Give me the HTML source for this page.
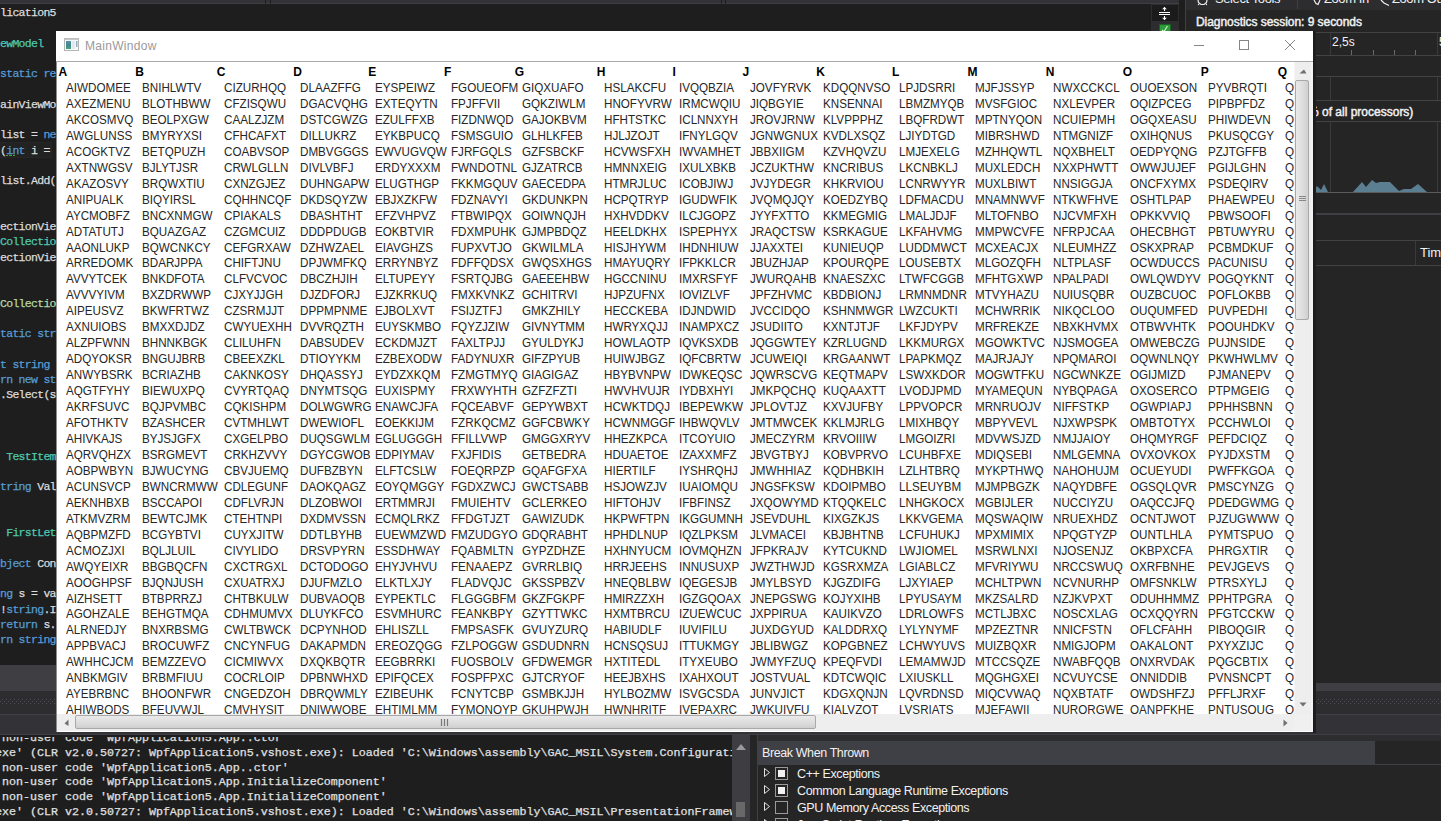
<!DOCTYPE html><html><head><meta charset="utf-8"><style>
*{margin:0;padding:0;box-sizing:border-box}
html,body{width:1441px;height:821px;overflow:hidden;background:#1e1e1e;font-family:"Liberation Sans",sans-serif}
.a{position:absolute}
.mono{font-family:"Liberation Mono",monospace;white-space:pre}
.code{font-size:11.5px;letter-spacing:-0.7px;line-height:15.29px;color:#dcdcdc;-webkit-text-stroke:0.25px currentColor}
.k{color:#569cd6}.t{color:#4ec9b0}.y{color:#b8d7a3}
.out{font-size:11.67px;line-height:14.75px;color:#e0e0e0;-webkit-text-stroke:0.25px currentColor}
.win{left:56px;top:31px;width:1257px;height:701px;background:#fff;overflow:hidden}
.col{position:absolute;top:0;white-space:pre;font-size:12px;line-height:15.95px;color:#262626;transform:scaleX(0.97);transform-origin:0 0}
.hdr{position:absolute;font-weight:bold;font-size:12px;color:#000}
</style></head><body><div class="a" style="left:0;top:0;width:1179px;height:4px;background:#333337"></div><div class="a" style="left:0;top:3px;width:1179px;height:1px;background:#3f3f46"></div><div class="a" style="left:265px;top:0;width:1px;height:4px;background:#1e1e1e"></div><div class="a" style="left:270px;top:0;width:1px;height:4px;background:#1e1e1e"></div><div class="a" style="left:721px;top:0;width:1px;height:4px;background:#1e1e1e"></div><div class="a" style="left:725px;top:0;width:1px;height:4px;background:#1e1e1e"></div><div class="a" style="left:0;top:142px;width:52px;height:16px;background:#222223;border:1px solid #262627;border-left:0"></div><div class="a" style="left:6px;top:155px;width:10px;height:1px;background:repeating-linear-gradient(90deg,#3aa83a 0 2px,transparent 2px 3.5px)"></div><div class="a mono code" style="left:0;top:5px;width:60px">lication5

<span class="t">ewModel</span>

<span class="k">static re</span>

ainViewMo

list = <span class="k">ne</span>
(<span class="k">int</span> i = 

list.Add(


ectionVie
<span class="t">Collectio</span>
ectionVie


<span class="y">Collectio</span>

<span class="k">tatic str</span>

<span class="k">t string</span>
<span class="k">rn new st</span>
.Select(s



 <span class="t">TestItem</span>

<span class="k">tring</span> Val


 <span class="t">FirstLet</span>

<span class="k">bject</span> Con

<span class="k">ng</span> s = va
!<span class="k">string</span>.I
<span class="k">return</span> s.
<span class="k">rn string</span></div><div class="a" style="left:1151px;top:4px;width:28px;height:27px;background:#2d2d30"></div><div class="a" style="left:1152px;top:5px;width:26px;height:16px;background:#1b1b1c"></div><svg class="a" style="left:1152px;top:5px" width="26" height="16"><g stroke="#fff" stroke-width="1" fill="none"><line x1="7" y1="7.5" x2="18" y2="7.5"/><line x1="7" y1="9.5" x2="18" y2="9.5"/><line x1="12.5" y1="3" x2="12.5" y2="6"/><line x1="12.5" y1="11" x2="12.5" y2="14"/></g><g fill="#fff"><path d="M10.2 4.2 L12.5 1.8 L14.8 4.2Z"/><path d="M10.2 12.8 L12.5 15.2 L14.8 12.8Z"/></g></svg><div class="a" style="left:1159px;top:24px;width:12px;height:8px;background:#2e9c3a;border:1px solid #1f5e27;border-bottom:0"></div><svg class="a" style="left:1159px;top:24px" width="12" height="8"><path d="M3 6 L5 7.5 L8.5 2" stroke="#c8f0c8" stroke-width="1.2" fill="none"/></svg><div class="a" style="left:1185px;top:0;width:1px;height:32px;background:#3f3f46"></div><div class="a" style="left:0;top:665px;width:1441px;height:26px;background:#3e3e43"></div><div class="a" style="left:0;top:691px;width:1441px;height:23px;background:#2d2d30"></div><svg class="a" style="left:0;top:697px" width="1441" height="8"><defs><pattern id="dp" width="4" height="4" patternUnits="userSpaceOnUse"><rect x="0" y="0" width="1" height="1" fill="#4e4e53"/><rect x="2" y="2" width="1" height="1" fill="#4e4e53"/></pattern></defs><rect x="0" y="2" width="1441" height="5" fill="url(#dp)"/></svg><div class="a" style="left:0;top:714px;width:1441px;height:1px;background:#3f3f46"></div><div class="a" style="left:0;top:715px;width:1441px;height:19px;background:#333337"></div><div class="a" style="left:0;top:734px;width:1441px;height:1px;background:#3f3f46"></div><div class="a" style="left:1186px;top:0;width:255px;height:683px;background:#252526"></div><div class="a" style="left:1186px;top:0;width:255px;height:10px;background:#2d2d30"></div><svg class="a" style="left:1196px;top:0" width="200" height="10"><g fill="none" stroke="#f1f1f1" stroke-width="1.2"><path d="M2 0 L2.5 2.5 L5 4.5 L8 4.5 L10.5 2.5 L11 0"/><path d="M3 3.8 L2.2 5 M10 3.8 L10.8 5"/><path d="M118 0 L120 3.5 L122 4.5 L124 0"/><path d="M185 0 L188 3 L193 5.5"/></g></svg><div class="a" style="left:1297px;top:0;width:1px;height:9px;background:#3f3f46"></div><div class="a" style="left:1196px;top:15px;font-size:12px;color:#f1f1f1;white-space:pre;letter-spacing:-0.05px;-webkit-text-stroke:0.45px #f1f1f1">Diagnostics session: 9 seconds</div><div class="a" style="left:1215px;top:-9px;font-size:13px;color:#f1f1f1;white-space:pre;letter-spacing:-0.4px">Select Tools</div><div class="a" style="left:1324px;top:-9px;font-size:13px;color:#f1f1f1;white-space:pre;letter-spacing:-0.4px">Zoom In</div><div class="a" style="left:1392px;top:-9px;font-size:13px;color:#f1f1f1;white-space:pre;letter-spacing:-0.4px">Zoom Out</div><div class="a" style="left:1313px;top:32px;width:128px;height:1px;background:#434346"></div><div class="a" style="left:1313px;top:55px;width:128px;height:1px;background:#434346"></div><div class="a" style="left:1313px;top:76px;width:128px;height:1px;background:#434346"></div><div class="a" style="left:1313px;top:100px;width:128px;height:1px;background:#434346"></div><div class="a" style="left:1313px;top:121px;width:128px;height:1px;background:#434346"></div><div class="a" style="left:1313px;top:192px;width:128px;height:1px;background:#5b5b5e"></div><div class="a" style="left:1313px;top:213px;width:128px;height:2px;background:#3f3f46"></div><div class="a" style="left:1313px;top:240px;width:128px;height:1px;background:#434346"></div><div class="a" style="left:1313px;top:265px;width:128px;height:1px;background:#434346"></div><div class="a" style="left:1330px;top:33px;width:1px;height:22px;background:#3a3a3d"></div><div class="a" style="left:1437px;top:33px;width:1px;height:22px;background:#3a3a3d"></div><div class="a" style="left:1330px;top:77px;width:1px;height:23px;background:#3a3a3d"></div><div class="a" style="left:1437px;top:77px;width:1px;height:23px;background:#3a3a3d"></div><div class="a" style="left:1330px;top:122px;width:1px;height:70px;background:#3a3a3d"></div><div class="a" style="left:1437px;top:122px;width:1px;height:70px;background:#3a3a3d"></div><div class="a" style="left:1415px;top:241px;width:1px;height:24px;background:#3a3a3d"></div><div class="a" style="left:1351px;top:50px;width:1px;height:5px;background:#6a6a6a"></div><div class="a" style="left:1373px;top:50px;width:1px;height:5px;background:#6a6a6a"></div><div class="a" style="left:1394px;top:50px;width:1px;height:5px;background:#6a6a6a"></div><div class="a" style="left:1415px;top:50px;width:1px;height:5px;background:#6a6a6a"></div><div class="a" style="left:1332px;top:35px;font-size:12px;color:#f1f1f1;white-space:pre">2,5s</div><div class="a" style="left:1439px;top:35px;font-size:12px;color:#f1f1f1;white-space:pre">5</div><div class="a" style="left:1308px;top:105px;font-size:12px;color:#f1f1f1;white-space:pre;-webkit-text-stroke:0.45px #f1f1f1">% of all processors)</div><svg class="a" style="left:1313px;top:175px" width="128" height="18"><path d="M0 17 L4 11 L8 15 L11 9 L15 17 L40 17 L49 7 L53 12 L59 5 L63 8 L67 7 L77 7 L86 16 L91 14 L98 14 L105 9 L114 17 Z" fill="#5b7e91"/></svg><div class="a" style="left:1420px;top:245px;font-size:13px;color:#f1f1f1;white-space:pre">Tim</div><div class="a" style="left:0;top:735px;width:1441px;height:86px;background:#252526"></div><div class="a" style="left:0;top:735px;width:732px;height:86px;background:#1e1e1e"></div><div class="a" style="left:0;top:737px;width:732px;height:84px;overflow:hidden"><div class="a mono out" style="left:-5px;top:-6px"> non-user code 'WpfApplication5.App..ctor'
exe' (CLR v2.0.50727: WpfApplication5.vshost.exe): Loaded 'C:\Windows\assembly\GAC_MSIL\System.Configurati
 non-user code 'WpfApplication5.App..ctor'
 non-user code 'WpfApplication5.App.InitializeComponent'
 non-user code 'WpfApplication5.App.InitializeComponent'
exe' (CLR v2.0.50727: WpfApplication5.vshost.exe): Loaded 'C:\Windows\assembly\GAC_MSIL\PresentationFramew</div></div><div class="a" style="left:732px;top:735px;width:18px;height:86px;background:#3e3e42"></div><svg class="a" style="left:736px;top:744px" width="10" height="6"><path d="M0 6 L5 0 L10 6Z" fill="#999"/></svg><div class="a" style="left:736px;top:802px;width:9px;height:15px;background:#686868"></div><div class="a" style="left:757px;top:735px;width:1px;height:86px;background:#3f3f46"></div><div class="a" style="left:758px;top:735px;width:683px;height:6px;background:#2d2d30"></div><div class="a" style="left:758px;top:741px;width:617px;height:24px;background:#3f3f46"></div><div class="a" style="left:1375px;top:764px;width:66px;height:1px;background:#3f3f46"></div><div class="a" style="left:762px;top:746px;font-size:12.5px;color:#f1f1f1;white-space:pre;letter-spacing:-0.4px">Break When Thrown</div><svg class="a" style="left:764px;top:768px" width="7" height="9"><path d="M0.5 0.5 L5.5 4.5 L0.5 8.5Z" fill="none" stroke="#e0e0e0" stroke-width="1"/></svg><div class="a" style="left:775px;top:767px;width:13px;height:13px;border:1px solid #9a9a9a;background:#252526"></div><div class="a" style="left:778px;top:770px;width:7px;height:7px;background:#f1f1f1"></div><div class="a" style="left:797px;top:767px;font-size:12.5px;color:#f1f1f1;white-space:pre;letter-spacing:-0.4px">C++ Exceptions</div><svg class="a" style="left:764px;top:785px" width="7" height="9"><path d="M0.5 0.5 L5.5 4.5 L0.5 8.5Z" fill="none" stroke="#e0e0e0" stroke-width="1"/></svg><div class="a" style="left:775px;top:784px;width:13px;height:13px;border:1px solid #9a9a9a;background:#252526"></div><div class="a" style="left:778px;top:787px;width:7px;height:7px;background:#f1f1f1"></div><div class="a" style="left:797px;top:784px;font-size:12.5px;color:#f1f1f1;white-space:pre;letter-spacing:-0.4px">Common Language Runtime Exceptions</div><svg class="a" style="left:764px;top:802px" width="7" height="9"><path d="M0.5 0.5 L5.5 4.5 L0.5 8.5Z" fill="none" stroke="#e0e0e0" stroke-width="1"/></svg><div class="a" style="left:775px;top:801px;width:13px;height:13px;border:1px solid #9a9a9a;background:#252526"></div><div class="a" style="left:797px;top:801px;font-size:12.5px;color:#f1f1f1;white-space:pre;letter-spacing:-0.4px">GPU Memory Access Exceptions</div><svg class="a" style="left:764px;top:819px" width="7" height="9"><path d="M0.5 0.5 L5.5 4.5 L0.5 8.5Z" fill="none" stroke="#e0e0e0" stroke-width="1"/></svg><div class="a" style="left:775px;top:818px;width:13px;height:13px;border:1px solid #9a9a9a;background:#252526"></div><div class="a" style="left:797px;top:818px;font-size:12.5px;color:#f1f1f1;white-space:pre;letter-spacing:-0.4px">JavaScript Runtime Exceptions</div><div class="a" style="left:1313px;top:31px;width:3px;height:702px;background:linear-gradient(90deg,#1a1a1a,#202021)"></div><div class="a win"><svg class="a" style="left:8px;top:7px" width="15" height="13"><defs><linearGradient id="ig" x1="0" y1="0" x2="0" y2="1"><stop offset="0" stop-color="#5a8fa8"/><stop offset="0.5" stop-color="#3e8a90"/><stop offset="1" stop-color="#4aa07a"/></linearGradient></defs><rect x="0.5" y="0.5" width="14" height="12" fill="#f4fafa" stroke="#b4b4b4"/><rect x="0.5" y="0.5" width="14" height="1.5" fill="#c8c8c8"/><rect x="2" y="3" width="5" height="8" fill="url(#ig)"/><rect x="8" y="3" width="3" height="8" fill="#e6e6ee"/><rect x="12" y="3" width="1.5" height="6" fill="#8fb0b8"/></svg><div class="a" style="left:29px;top:8px;font-size:12px;color:#999;white-space:pre;letter-spacing:0.3px">MainWindow</div><svg class="a" style="left:1130px;top:0" width="127" height="30"><g stroke="#858585" stroke-width="1" fill="none"><line x1="8" y1="14.5" x2="18" y2="14.5"/><rect x="53.5" y="9.5" width="9" height="9"/><line x1="99" y1="9" x2="109" y2="19"/><line x1="109" y1="9" x2="99" y2="19"/></g></svg><div class="a" style="left:0;top:30px;width:1257px;height:1px;background:#a9a9a9"></div><div class="a" style="left:0;top:31px;width:1px;height:670px;background:#8c8c8c"></div><div class="a" style="left:1px;top:31px;width:1237px;height:652px;overflow:hidden"><div class="hdr" style="left:1.6px;top:3px">A</div><div class="col" style="left:8.6px;top:19px">AIWDOMEE
AXEZMENU
AKCOSMVQ
AWGLUNSS
ACOGKTVZ
AXTNWGSV
AKAZOSVY
ANIPUALK
AYCMOBFZ
ADTATUTJ
AAONLUKP
ARREDOMK
AVVYTCEK
AVVVYIVM
AIPEUSVZ
AXNUIOBS
ALZPFWNN
ADQYOKSR
ANWYBSRK
AQGTFYHY
AKRFSUVC
AFOTHKTV
AHIVKAJS
AQRVQHZX
AOBPWBYN
ACUNSVCP
AEKNHBXB
ATKMVZRM
AQBPMZFD
ACMOZJXI
AWQYEIXR
AOOGHPSF
AIZHSETT
AGOHZALE
ALRNEDJY
APPBVACJ
AWHHCJCM
ANBKMGIV
AYEBRBNC
AHIWBODS</div><div class="hdr" style="left:78.3px;top:3px">B</div><div class="col" style="left:85.3px;top:19px">BNIHLWTV
BLOTHBWW
BEOLPXGW
BMYRYXSI
BETQPUZH
BJLYTJSR
BRQWXTIU
BIQYIRSL
BNCXNMGW
BQUAZGAZ
BQWCNKCY
BDARJPPA
BNKDFOTA
BXZDRWWP
BKWFRTWZ
BMXXDJDZ
BHNNKBGK
BNGUJBRB
BCRIAZHB
BIEWUXPQ
BQJPVMBC
BZASHCER
BYJSJGFX
BSRGMEVT
BJWUCYNG
BWNCRMWW
BSCCAPOI
BEWTCJMK
BCGYBTVI
BQLJLUIL
BBGBQCFN
BJQNJUSH
BTBPRRZJ
BEHGTMQA
BNXRBSMG
BROCUWFZ
BEMZZEVO
BRBMFIUU
BHOONFWR
BFEUVWJL</div><div class="hdr" style="left:159.8px;top:3px">C</div><div class="col" style="left:166.8px;top:19px">CIZURHQQ
CFZISQWU
CAALZJZM
CFHCAFXT
COABVSOP
CRWLGLLN
CXNZGJEZ
CQHHNCQF
CPIAKALS
CZGMCUIZ
CEFGRXAW
CHIFTJNU
CLFVCVOC
CJXYJJGH
CZSRMJJT
CWYUEXHH
CLILUHFN
CBEEXZKL
CAKNKOSY
CVYRTQAQ
CQKISHPM
CVTMHLWT
CXGELPBO
CRKHZVVY
CBVJUEMQ
CDLEGUNF
CDFLVRJN
CTEHTNPI
CUYXJITW
CIVYLIDO
CXCTRGXL
CXUATRXJ
CHTBKULW
CDHMUMVX
CWLTBWCK
CNCYNFUG
CICMIWVX
COCRLOIP
CNGEDZOH
CMVHYSIT</div><div class="hdr" style="left:236.3px;top:3px">D</div><div class="col" style="left:243.3px;top:19px">DLAAZFFG
DGACVQHG
DSTCGWZG
DILLUKRZ
DMBVGGGS
DIVLVBFJ
DUHNGAPW
DKDSQYZW
DBASHTHT
DDDPDUGB
DZHWZAEL
DPJWMFKQ
DBCZHJIH
DJZDFORJ
DPPMPNME
DVVRQZTH
DABSUDEV
DTIOYYKM
DHQASSYJ
DNYMTSQG
DOLWGWRG
DWEWIOFL
DUQSGWLM
DGYCGWOB
DUFBZBYN
DAOKQAGZ
DLZOBWOI
DXDMVSSN
DDTLBYHB
DRSVPYRN
DCTODOGO
DJUFMZLO
DUBVAOQB
DLUYKFCO
DCPYNHOD
DAKAPMDN
DXQKBQTR
DPBNWHXD
DBRQWMLY
DNIWWOBE</div><div class="hdr" style="left:311.3px;top:3px">E</div><div class="col" style="left:318.3px;top:19px">EYSPEIWZ
EXTEQYTN
EZULFFXB
EYKBPUCQ
EWVUGVQW
ERDYXXXM
ELUGTHGP
EBJXZKFW
EFZVHPVZ
EOKBTVIR
EIAVGHZS
ERRYNBYZ
ELTUPEYY
EJZKRKUQ
EJBOLXVT
EUYSKMBO
ECKDMJZT
EZBEXODW
EYDZXKQM
EUXISPMY
ENAWCJFA
EOEKKIJM
EGLUGGGH
EDPIYMAV
ELFTCSLW
EOYQMGGY
ERTMMRJI
ECMQLRKZ
EUEWMZWD
ESSDHWAY
EHYJVHVU
ELKTLXJY
EYPEKTLC
ESVMHURC
EHLISZLL
EREOZQGG
EEGBRRKI
EPIFQCEX
EZIBEUHK
EHTIMLMM</div><div class="hdr" style="left:387.0px;top:3px">F</div><div class="col" style="left:394.0px;top:19px">FGOUEOFM
FPJFFVII
FIZDNWQD
FSMSGUIO
FJRFGQLS
FWNDOTNL
FKKMGQUV
FDZNAVYI
FTBWIPQX
FDXMPUHK
FUPXVTJO
FDFFQDSX
FSRTQJBG
FMXKVNKZ
FSIJZTFJ
FQYZJZIW
FAXLTPJJ
FADYNUXR
FZMGTMYQ
FRXWYHTH
FQCEABVF
FZRKQCMZ
FFILLVWP
FXJFIDIS
FOEQRPZP
FGDXZWCJ
FMUIEHTV
FFDGTJZT
FMZUDGYO
FQABMLTN
FENAAEPZ
FLADVQJC
FLGGGBFM
FEANKBPY
FMPSASFK
FZLPOGGW
FUOSBOLV
FOSPFPXC
FCNYTCBP
FYMONOYP</div><div class="hdr" style="left:457.8px;top:3px">G</div><div class="col" style="left:464.8px;top:19px">GIQXUAFO
GQKZIWLM
GAJOKBVM
GLHLKFEB
GZFSBCKF
GJZATRCB
GAECEDPA
GKDUNKPN
GOIWNQJH
GJMPBDQZ
GKWILMLA
GWQSXHGS
GAEEEHBW
GCHITRVI
GMKZHILY
GIVNYTMM
GYULDYKJ
GIFZPYUB
GIAGIGAZ
GZFZFZTI
GEPYWBXT
GGFCBWKY
GMGGXRYV
GETBEDRA
GQAFGFXA
GWCTSABB
GCLERKEO
GAWIZUDK
GDQRABHT
GYPZDHZE
GVRRLBIQ
GKSSPBZV
GKZFGKPF
GZYTTWKC
GVUYZURQ
GSDUDNRN
GFDWEMGR
GJTCRYOF
GSMBKJJH
GKUHPWJH</div><div class="hdr" style="left:539.8px;top:3px">H</div><div class="col" style="left:546.8px;top:19px">HSLAKCFU
HNOFYVRW
HFHTSTKC
HJLJZOJT
HCVWSFXH
HMNNXEIG
HTMRJLUC
HCPQTRYP
HXHVDDKV
HEELDKHX
HISJHYWM
HMAYUQRY
HGCCNINU
HJPZUFNX
HECCKEBA
HWRYXQJJ
HOWLAOTP
HUIWJBGZ
HBYBVNPW
HWVHVUJR
HCWKTDQJ
HCWNMGGF
HHEZKPCA
HDUAETOE
HIERTILF
HSJOWZJV
HIFTOHJV
HKPWFTPN
HPHDLNUP
HXHNYUCM
HRRJEEHS
HNEQBLBW
HMIRZZXH
HXMTBRCU
HABIUDLF
HCNSQSUJ
HXTITEDL
HEEJBXHS
HYLBOZMW
HWNHRITF</div><div class="hdr" style="left:615.4px;top:3px">I</div><div class="col" style="left:622.4px;top:19px">IVQQBZIA
IRMCWQIU
ICLNNXYH
IFNYLGQV
IWVAMHET
IXULXBKB
ICOBJIWJ
IGUDWFIK
ILCJGOPZ
ISPEPHYX
IHDNHIUW
IFPKKLCR
IMXRSFYF
IOVIZLVF
IDJNDWID
INAMPXCZ
IQVKSXDB
IQFCBRTW
IDWKEQSC
IYDBXHYI
IBEPEWKW
IHBWQVLV
ITCOYUIO
IZAXXMFZ
IYSHRQHJ
IUAIOMQU
IFBFINSZ
IKGGUMNH
IQZLPKSM
IOVMQHZN
INNUSUXP
IQEGESJB
IGZGQOAX
IZUEWCUC
IUVIFILU
ITTUKMGY
ITYXEUBO
IXAHXOUT
ISVGCSDA
IVEPAXRC</div><div class="hdr" style="left:685.6px;top:3px">J</div><div class="col" style="left:692.6px;top:19px">JOVFYRVK
JIQBGYIE
JROVJRNW
JGNWGNUX
JBBXIIGM
JCZUKTHW
JVJYDEGR
JVQMQJQY
JYYFXTTO
JRAQCTSW
JJAXXTEI
JBUZHJAP
JWURQAHB
JPFZHVMC
JVCCIDQO
JSUDIITO
JQGGWTEY
JCUWEIQI
JQWRSCVG
JMKPQCHQ
JPLOVTJZ
JMTMWCEK
JMECZYRM
JBVGTBYJ
JMWHHIAZ
JNGSFKSW
JXQOWYMD
JSEVDUHL
JLVMACEI
JFPKRAJV
JWZTHWJD
JMYLBSYD
JNEPGSWG
JXPPIRUA
JUXDGYUD
JBLIBWGZ
JWMYFZUQ
JOSTVUAL
JUNVJICT
JWKUIVFU</div><div class="hdr" style="left:759.2px;top:3px">K</div><div class="col" style="left:766.2px;top:19px">KDQQNVSO
KNSENNAI
KLVPPPHZ
KVDLXSQZ
KZVHQVZU
KNCRIBUS
KHKRVIOU
KOEDZYBQ
KKMEGMIG
KSRKAGUE
KUNIEUQP
KPOURQPE
KNAESZXC
KBDBIONJ
KSHNMWGR
KXNTJTJF
KZRLUGND
KRGAANWT
KEQTMAPV
KUQAAXTT
KXVJUFBY
KKLMJRLG
KRVOIIIW
KOBVPRVO
KQDHBKIH
KDOIPMBO
KTQQKELC
KIXGZKJS
KBJBHTNB
KYTCUKND
KGSRXMZA
KJGZDIFG
KOJYXIHB
KAUIKVZO
KALDDRXQ
KOPGBNEZ
KPEQFVDI
KDTCWQIC
KDGXQNJN
KIALVZOT</div><div class="hdr" style="left:835.0px;top:3px">L</div><div class="col" style="left:842.0px;top:19px">LPJDSRRI
LBMZMYQB
LBQFRDWT
LJIYDTGD
LMJEXELG
LKCNBKLJ
LCNRWYYR
LDFMACDU
LMALJDJF
LKFAHVMG
LUDDMWCT
LOUSEBTX
LTWFCGGB
LRMNMDNR
LWZCUKTI
LKFJDYPV
LKKMURGX
LPAPKMQZ
LSWXKDOR
LVODJPMD
LPPVOPCR
LMIXHBQY
LMGOIZRI
LCUHBFXE
LZLHTBRQ
LLSEUYBM
LNHGKOCX
LKKVGEMA
LCFUHUKJ
LWJIOMEL
LGIABLCZ
LJXYIAEP
LPYUSAYM
LDRLOWFS
LYLYNYMF
LCHWYUVS
LEMAMWJD
LXIUSKLL
LQVRDNSD
LVSRIATS</div><div class="hdr" style="left:910.6px;top:3px">M</div><div class="col" style="left:917.6px;top:19px">MJFJSSYP
MVSFGIOC
MPTNYQON
MIBRSHWD
MZHHQWTL
MUXLEDCH
MUXLBIWT
MNAMNWVF
MLTOFNBO
MMPWCVFE
MCXEACJX
MLGOZQFH
MFHTGXWP
MTVYHAZU
MCHWRRIK
MRFREKZE
MGOWKTVC
MAJRJAJY
MOGWTFKU
MYAMEQUN
MRNRUOJV
MBPYVEVL
MDVWSJZD
MDIQSEBI
MYKPTHWQ
MJMPBGZK
MGBIJLER
MQSWAQIW
MPXMIMIX
MSRWLNXI
MFVRIYWU
MCHLTPWN
MKZSALRD
MCTLJBXC
MPZEZTNR
MUIZBQXR
MTCCSQZE
MQGHGXEI
MIQCVWAQ
MJEFAWII</div><div class="hdr" style="left:988.8px;top:3px">N</div><div class="col" style="left:995.8px;top:19px">NWXCCKCL
NXLEVPER
NCUIEPMH
NTMGNIZF
NQXBHELT
NXXPHWTT
NNSIGGJA
NTKWFHVE
NJCVMFXH
NFRPJCAA
NLEUMHZZ
NLTPLASF
NPALPADI
NUIUSQBR
NIKQCLOO
NBXKHVMX
NJSMOGEA
NPQMAROI
NGCWNKZE
NYBQPAGA
NIFFSTKP
NJXWPSPK
NMJJAIOY
NMLGEMNA
NAHOHUJM
NAQYDBFE
NUCCIYZU
NRUEXHDZ
NPQGTYZP
NJOSENJZ
NRCCSWUQ
NCVNURHP
NZJKVPXT
NOSCXLAG
NNICFSTN
NMIGJOPM
NWABFQQB
NCVUYCSE
NQXBTATF
NURORGWE</div><div class="hdr" style="left:1065.8px;top:3px">O</div><div class="col" style="left:1072.8px;top:19px">OUOEXSON
OQIZPCEG
OGQXEASU
OXIHQNUS
OEDPYQNG
OWWJUJEF
ONCFXYMX
OSHTLPAP
OPKKVVIQ
OHECBHGT
OSKXPRAP
OCWDUCCS
OWLQWDYV
OUZBCUOC
OUQUMFED
OTBWVHTK
OMWEBCZG
OQWNLNQY
OGIJMIZD
OXOSERCO
OGWPIAPJ
OMBTOTYX
OHQMYRGF
OVXOVKOX
OCUEYUDI
OGSQLQVR
OAQCCJFQ
OCNTJWOT
OUNTLHLA
OKBPXCFA
OXRFBNHE
OMFSNKLW
ODUHHMMZ
OCXQQYRN
OFLCFAHH
OAKALONT
ONXRVDAK
ONNIDDIB
OWDSHFZJ
OANPFKHE</div><div class="hdr" style="left:1143.8px;top:3px">P</div><div class="col" style="left:1150.8px;top:19px">PYVBRQTI
PIPBPFDZ
PHIWDEVN
PKUSQCGY
PZJTGFFB
PGIJLGHN
PSDEQIRV
PHAEWPEU
PBWSOOFI
PBTUWYRU
PCBMDKUF
PACUNISU
POGQYKNT
POFLOKBB
PUVPEDHI
POOUHDKV
PUJNSIDE
PKWHWLMV
PJMANEPV
PTPMGEIG
PPHHSBNN
PCCHWLOI
PEFDCIQZ
PYJDXSTM
PWFFKGOA
PMSCYNZG
PDEDGWMG
PJZUGWWW
PYMTSPUO
PHRGXTIR
PEVJGEVS
PTRSXYLJ
PPHTPGRA
PFGTCCKW
PIBOQGIR
PXYXZIJC
PQGCBTIX
PVNSNCPT
PFFLJRXF
PNTUSOUG</div><div class="hdr" style="left:1220.8px;top:3px">Q</div><div class="col" style="left:1227.8px;top:19px">Q
Q
Q
Q
Q
Q
Q
Q
Q
Q
Q
Q
Q
Q
Q
Q
Q
Q
Q
Q
Q
Q
Q
Q
Q
Q
Q
Q
Q
Q
Q
Q
Q
Q
Q
Q
Q
Q
Q
Q</div></div><div class="a" style="left:1238px;top:31px;width:17px;height:652px;background:#eeeeee;border-left:1px solid #f4f4f4"></div><svg class="a" style="left:1243px;top:38px" width="8" height="5"><path d="M0.5 4.5 L5 0.5 L7.5 4.5Z" fill="#707070"/></svg><svg class="a" style="left:1243px;top:671px" width="8" height="5"><path d="M0.5 0.5 L7.5 0.5 L4 4.5Z" fill="#707070"/></svg><div class="a" style="left:1239px;top:49px;width:14px;height:240px;border:1px solid #a8a8a8;border-radius:2px;background:linear-gradient(90deg,#eaeaea,#dcdcdc 60%,#cfcfcf)"></div><svg class="a" style="left:1243px;top:164px" width="7" height="8"><g stroke="#888" stroke-width="1"><line x1="0" y1="1.5" x2="7" y2="1.5"/><line x1="0" y1="3.5" x2="7" y2="3.5"/><line x1="0" y1="5.5" x2="7" y2="5.5"/></g></svg><div class="a" style="left:1px;top:683px;width:1237px;height:17px;background:#eeeeee"></div><div class="a" style="left:1238px;top:683px;width:17px;height:17px;background:#f0f0f0"></div><svg class="a" style="left:8px;top:688px" width="5" height="8"><path d="M4.5 0.5 L0.5 4.5 L4.5 7Z" fill="#707070"/></svg><svg class="a" style="left:1227px;top:688px" width="5" height="8"><path d="M0.5 0.5 L4.5 4 L0.5 7.5Z" fill="#707070"/></svg><div class="a" style="left:19px;top:684px;width:741px;height:14px;border:1px solid #a8a8a8;border-radius:2px;background:linear-gradient(180deg,#eaeaea,#dcdcdc 60%,#cfcfcf)"></div><svg class="a" style="left:384px;top:688px" width="10" height="7"><g stroke="#777" stroke-width="1.2"><line x1="1.5" y1="0" x2="1.5" y2="7"/><line x1="4.5" y1="0" x2="4.5" y2="7"/><line x1="7.5" y1="0" x2="7.5" y2="7"/></g></svg><div class="a" style="left:1255px;top:31px;width:2px;height:670px;background:#f4f4f4"></div></div></body></html>
